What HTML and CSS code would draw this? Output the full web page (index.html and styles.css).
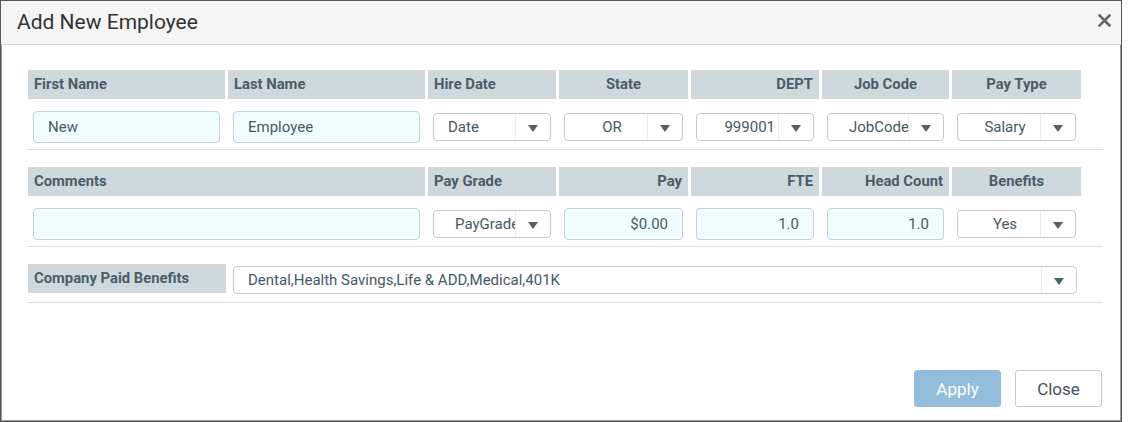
FILE: index.html
```html
<!DOCTYPE html>
<html lang="en">
<head>
  <meta charset="UTF-8">
  <title>Add New Employee</title>
  <link rel="stylesheet" href="styles.css">
</head>
<body>
  <div class="dialog">
    <div class="titlebar">
      <span class="title">Add New Employee</span>
      <svg class="close-x" width="13" height="13" viewBox="0 0 13 13">
        <path d="M1.5 1.5 L11.5 11.5 M11.5 1.5 L1.5 11.5" stroke="#666" stroke-width="2.6" stroke-linecap="square"/>
      </svg>
    </div>

    <div class="body">
      <!-- row 1 -->
      <div class="section">
        <div class="grid heads">
          <div class="head">First Name</div>
          <div class="head">Last Name</div>
          <div class="head">Hire Date</div>
          <div class="head center">State</div>
          <div class="head right">DEPT</div>
          <div class="head center">Job Code</div>
          <div class="head center">Pay Type</div>
        </div>
        <div class="grid fields">
          <div class="cell"><div class="input">New</div></div>
          <div class="cell"><div class="input">Employee</div></div>
          <div class="cell"><div class="select"><span class="sel-text left">Date</span><span class="sel-arrow"></span></div></div>
          <div class="cell"><div class="select"><span class="sel-text center">OR</span><span class="sel-arrow"></span></div></div>
          <div class="cell"><div class="select"><span class="sel-text right">999001</span><span class="sel-arrow"></span></div></div>
          <div class="cell"><div class="select"><span class="sel-text clipped">JobCode</span><span class="sel-arrow"></span></div></div>
          <div class="cell"><div class="select"><span class="sel-text center">Salary</span><span class="sel-arrow"></span></div></div>
        </div>
      </div>

      <!-- row 2 -->
      <div class="section">
        <div class="grid heads">
          <div class="head span2">Comments</div>
          <div class="head">Pay Grade</div>
          <div class="head right">Pay</div>
          <div class="head right">FTE</div>
          <div class="head right">Head Count</div>
          <div class="head center">Benefits</div>
        </div>
        <div class="grid fields">
          <div class="cell span2"><div class="input"></div></div>
          <div class="cell"><div class="select"><span class="sel-text clipped">PayGrade</span><span class="sel-arrow"></span></div></div>
          <div class="cell"><div class="input num">$0.00</div></div>
          <div class="cell"><div class="input num">1.0</div></div>
          <div class="cell"><div class="input num">1.0</div></div>
          <div class="cell"><div class="select"><span class="sel-text center">Yes</span><span class="sel-arrow"></span></div></div>
        </div>
      </div>

      <!-- row 3 -->
      <div class="section benefits-row">
        <div class="head wide-head">Company Paid Benefits</div>
        <div class="select multi"><span class="sel-text left">Dental,Health Savings,Life &amp; ADD,Medical,401K</span><span class="sel-arrow"></span></div>
      </div>
    </div>

    <div class="footer">
      <button class="btn btn-apply" disabled>Apply</button>
      <button class="btn btn-close">Close</button>
    </div>
  </div>
</body>
</html>
```

FILE: styles.css
```css
body {
  margin: 0;
  background: #fff;
  font-family: Roboto, "Liberation Sans", sans-serif;
  color: #455a64;
}

.dialog {
  box-sizing: border-box;
  width: 1122px;
  height: 422px;
  border: 1px solid #555;
  box-shadow: inset 1px 0 0 #999, inset -1px 0 0 #999, inset 0 -1px 0 #999;
  display: flex;
  flex-direction: column;
  background: #fff;
}

.titlebar {
  height: 43px;
  background: #f5f5f5;
  border-bottom: 1px solid #d4d4d4;
  display: flex;
  align-items: center;
  justify-content: space-between;
  padding: 0 10px 0 16px;
}

.title {
  font-size: 21px;
  color: #333;
  margin-top: -1px;
}

.close-x {
  margin-top: -4px;
}

.body {
  padding: 25px 18px 0 26px;
}

.section {
  border-bottom: 1px solid #d5dde1;
  margin-bottom: 17px;
}

.grid {
  display: grid;
  grid-template-columns: 197px 197px 128px 129px 128px 127px 129px;
  column-gap: 3px;
  margin-left: 1px;
}

.span2 {
  grid-column: span 2;
}

.head {
  height: 29px;
  line-height: 29px;
  background: #cfd8dc;
  font-size: 14.8px;
  font-weight: bold;
  padding: 0 6px 0 6px;
  white-space: nowrap;
  color: #4a5d67;
}

.head.center { text-align: center; }
.head.right { text-align: right; }

.fields {
  padding: 12px 0 6px;
  align-items: center;
}

.cell {
  padding: 0 5px;
}

.input {
  box-sizing: border-box;
  height: 32px;
  line-height: 30px;
  background: #f0fdff;
  border: 1px solid #c8d0d4;
  border-radius: 4px;
  padding: 0 14px;
  font-size: 15px;
}

.input.num {
  text-align: right;
}

.select {
  box-sizing: border-box;
  height: 28px;
  border: 1px solid #c9c9c9;
  border-radius: 4px;
  background: #fff;
  display: flex;
  font-size: 15px;
}

.sel-text {
  flex: 1;
  overflow: hidden;
  white-space: nowrap;
  line-height: 26px;
}

.sel-text.left { padding-left: 14px; }
.sel-text.center { text-align: center; padding-left: 12px; }
.sel-text.right { text-align: right; padding-right: 3px; }
.sel-text.clipped { padding-left: 21px; }

.sel-arrow {
  width: 34px;
  border-left: 1px solid #ececec;
  position: relative;
}

.sel-arrow::after {
  content: "";
  position: absolute;
  left: 12px;
  top: 11px;
  border-left: 5px solid transparent;
  border-right: 5px solid transparent;
  border-top: 7px solid #4f616b;
}

.benefits-row {
  display: flex;
  align-items: flex-start;
  padding-bottom: 8px;
  margin-left: 1px;
}

.wide-head {
  width: 198px;
  box-sizing: border-box;
}

.select.multi {
  width: 844px;
  margin: 2px 0 0 7px;
}

.footer {
  margin-top: auto;
  display: flex;
  justify-content: flex-end;
  gap: 14px;
  padding: 0 19px 14px 0;
}

.btn {
  width: 87px;
  height: 37px;
  font-family: Roboto, "Liberation Sans", sans-serif;
  font-size: 17px;
  border-radius: 3px;
}

.btn-apply {
  background: #94bddc;
  border: 1px solid #94bddc;
  color: #fff;
}

.btn-close {
  background: #fff;
  border: 1px solid #c8c8c8;
  color: #44525b;
}
```
